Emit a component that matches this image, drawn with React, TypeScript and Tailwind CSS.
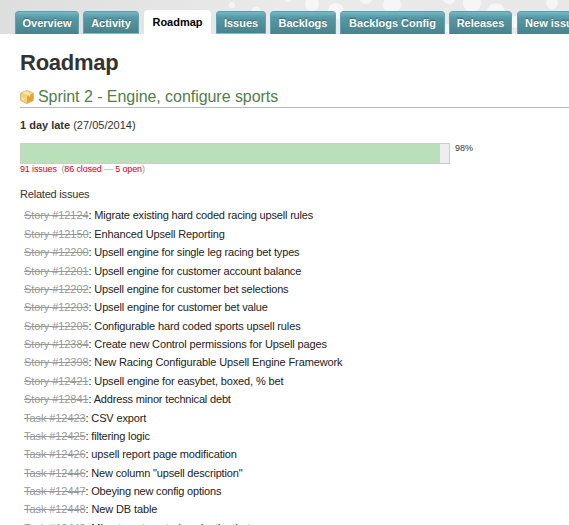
const tabs: [string, string][] = [
  ["Overview", "w-16 mr-1"],
  ["Activity", "w-14 mr-[5px] border-b border-b-[#7cc0cc]"],
  ["Roadmap", "w-[67px] mr-[5px]"],
  ["Issues", "w-[50px] mr-1 border-b border-b-[#7cc0cc]"],
  ["Backlogs", "w-[66px] mr-1"],
  ["Backlogs Config", "w-[105px] mr-1"],
  ["Releases", "w-[63px] mr-[5px]"],
  ["New issue", "w-[70px]"],
];

const issues: [string, string, string][] = [
  ["Story #12124", "Migrate existing hard coded racing upsell rules", "tracking-[-0.17px]"],
  ["Story #12150", "Enhanced Upsell Reporting", "tracking-[-0.14px]"],
  ["Story #12200", "Upsell engine for single leg racing bet types", "tracking-[-0.17px]"],
  ["Story #12201", "Upsell engine for customer account balance", "tracking-[-0.17px]"],
  ["Story #12202", "Upsell engine for customer bet selections", "tracking-[-0.17px]"],
  ["Story #12203", "Upsell engine for customer bet value", "tracking-[-0.14px]"],
  ["Story #12205", "Configurable hard coded sports upsell rules", "tracking-[-0.14px]"],
  ["Story #12384", "Create new Control permissions for Upsell pages", "tracking-[-0.14px]"],
  ["Story #12398", "New Racing Configurable Upsell Engine Framework", "tracking-[-0.12px]"],
  ["Story #12421", "Upsell engine for easybet, boxed, % bet", "tracking-[-0.14px]"],
  ["Story #12841", "Address minor technical debt", "tracking-[-0.17px]"],
  ["Task #12423", "CSV export", "tracking-[-0.14px]"],
  ["Task #12425", "filtering logic", "tracking-[-0.17px]"],
  ["Task #12426", "upsell report page modification", "tracking-[-0.14px]"],
  ["Task #12446", "New column \"upsell description\"", "tracking-[-0.17px]"],
  ["Task #12447", "Obeying new config options", "tracking-[-0.2px]"],
  ["Task #12448", "New DB table", "tracking-[-0.12px]"],
  ["Task #12449", "Migrate automated evaluation bet", "tracking-[-0.14px]"],
];

const dots = [
  [232, 5, 3], [256, 12, 5], [288, -2, 4], [312, 4, 7], [336, 11, 8], [366, -3, 7],
  [392, 5, 9], [449, -3, 7], [472, 3, 9], [496, 12, 9], [552, 3, 6], [447, 31, 7], [515, 22, 6],
];

function Tabs() {
  return (
    <header className="relative h-[34px] overflow-hidden bg-gradient-to-r from-[#dedede] via-[#eaeaea] to-[#e8e8e8]">
      <svg className="absolute inset-0" width="569" height="34">
        {dots.map(([x, y, r]) => (
          <circle key={x} cx={x} cy={y} r={r} fill="#fff" opacity="0.6" />
        ))}
      </svg>
      <nav className="relative flex h-full w-[700px] items-end pl-[15px] text-[11px] font-bold">
        {tabs.map(([label, cls]) =>
          label === "Roadmap" ? (
            <div key={label} className={`${cls} h-6 shrink-0 rounded-t bg-white text-center leading-[25px] text-black`}>
              {label}
            </div>
          ) : (
            <div
              key={label}
              className={`${cls} h-[23px] shrink-0 whitespace-nowrap rounded-t border-x border-t border-x-[#5da3b0] border-t-[#55a0ae] bg-gradient-to-b from-[#76b9c5] via-[#5799a5] via-25% to-[#49828c] text-center leading-[23px] text-white [text-shadow:0_-1px_1px_#32646e]`}
            >
              {label}
            </div>
          ),
        )}
      </nav>
    </header>
  );
}

function PackageIcon() {
  return (
    <svg width="14" height="14" viewBox="0 0 14 14" className="mr-1 shrink-0">
      <path d="M7 .5 13.3 3v7.5L7 13.5.7 10.5V3Z" fill="#e9b54c" stroke="#d39a42" strokeWidth=".7" strokeLinejoin="round" />
      <path d="M7 .8 13 3.2 7 6 1 3.2Z" fill="#f8dc95" />
      <path d="M1 3.5 7 6.2v6.9L1 10.2Z" fill="#f6d17a" />
      <path d="M7 6.2 13 3.5v6.7L7 13.1Z" fill="#e0a437" />
      <path d="m3.2 2.4 5.8 2.7v1.7l1.2-.6V4.5L4.8 1.7Z" fill="#fff3cd" />
      <path d="m2 8 2 1v1.5l-2-1Z" fill="#fff3cd" />
    </svg>
  );
}

export default function App() {
  return (
    <div className="h-[525px] w-[569px] overflow-hidden bg-white font-['Liberation_Sans',Arial,sans-serif] text-[11px] text-[#333]">
      <Tabs />
      <main className="pl-5">
        <h1 className="pt-[15px] text-[22px] font-bold leading-[27px] tracking-[-0.25px]">Roadmap</h1>
        <h2 className="mt-[9px] flex h-[23px] items-center border-b border-[#bbb] pt-px text-base tracking-[-0.05px] text-[#517d4b]">
          <PackageIcon />
          Sprint 2 - Engine, configure sports
        </h2>
        <p className="mt-[9px] leading-4">
          <b>1 day late</b> (27/05/2014)
        </p>
        <div className="mt-[10px] flex">
          <div className="flex h-[21px] w-[430px] border border-[#ccc] bg-[#eee]">
            <div className="w-[419px] bg-[#bae0ba]" />
          </div>
          <span className="ml-[5px] text-[9px] leading-[10px]">98%</span>
        </div>
        <p className="whitespace-pre text-[9px] leading-[11px] tracking-[-0.14px] text-[#999]">
          <span className="text-[#cc0022]">91 issues</span>{"  ("}
          <span className="text-[#cc0022]">86 closed</span> — <span className="text-[#cc0022]">5 open</span>)
        </p>
        <div className="mt-[11px] leading-4 tracking-[-0.2px]">Related issues</div>
        <ul className="ml-1 mt-[4.4px] leading-[18.37px] text-[#222]">
          {issues.map(([id, title, tracking]) => (
            <li key={id} className={`whitespace-nowrap ${tracking}`}>
              <span className="tracking-[-0.08px] text-[#999] line-through">{id}</span>: {title}
            </li>
          ))}
        </ul>
      </main>
    </div>
  );
}
